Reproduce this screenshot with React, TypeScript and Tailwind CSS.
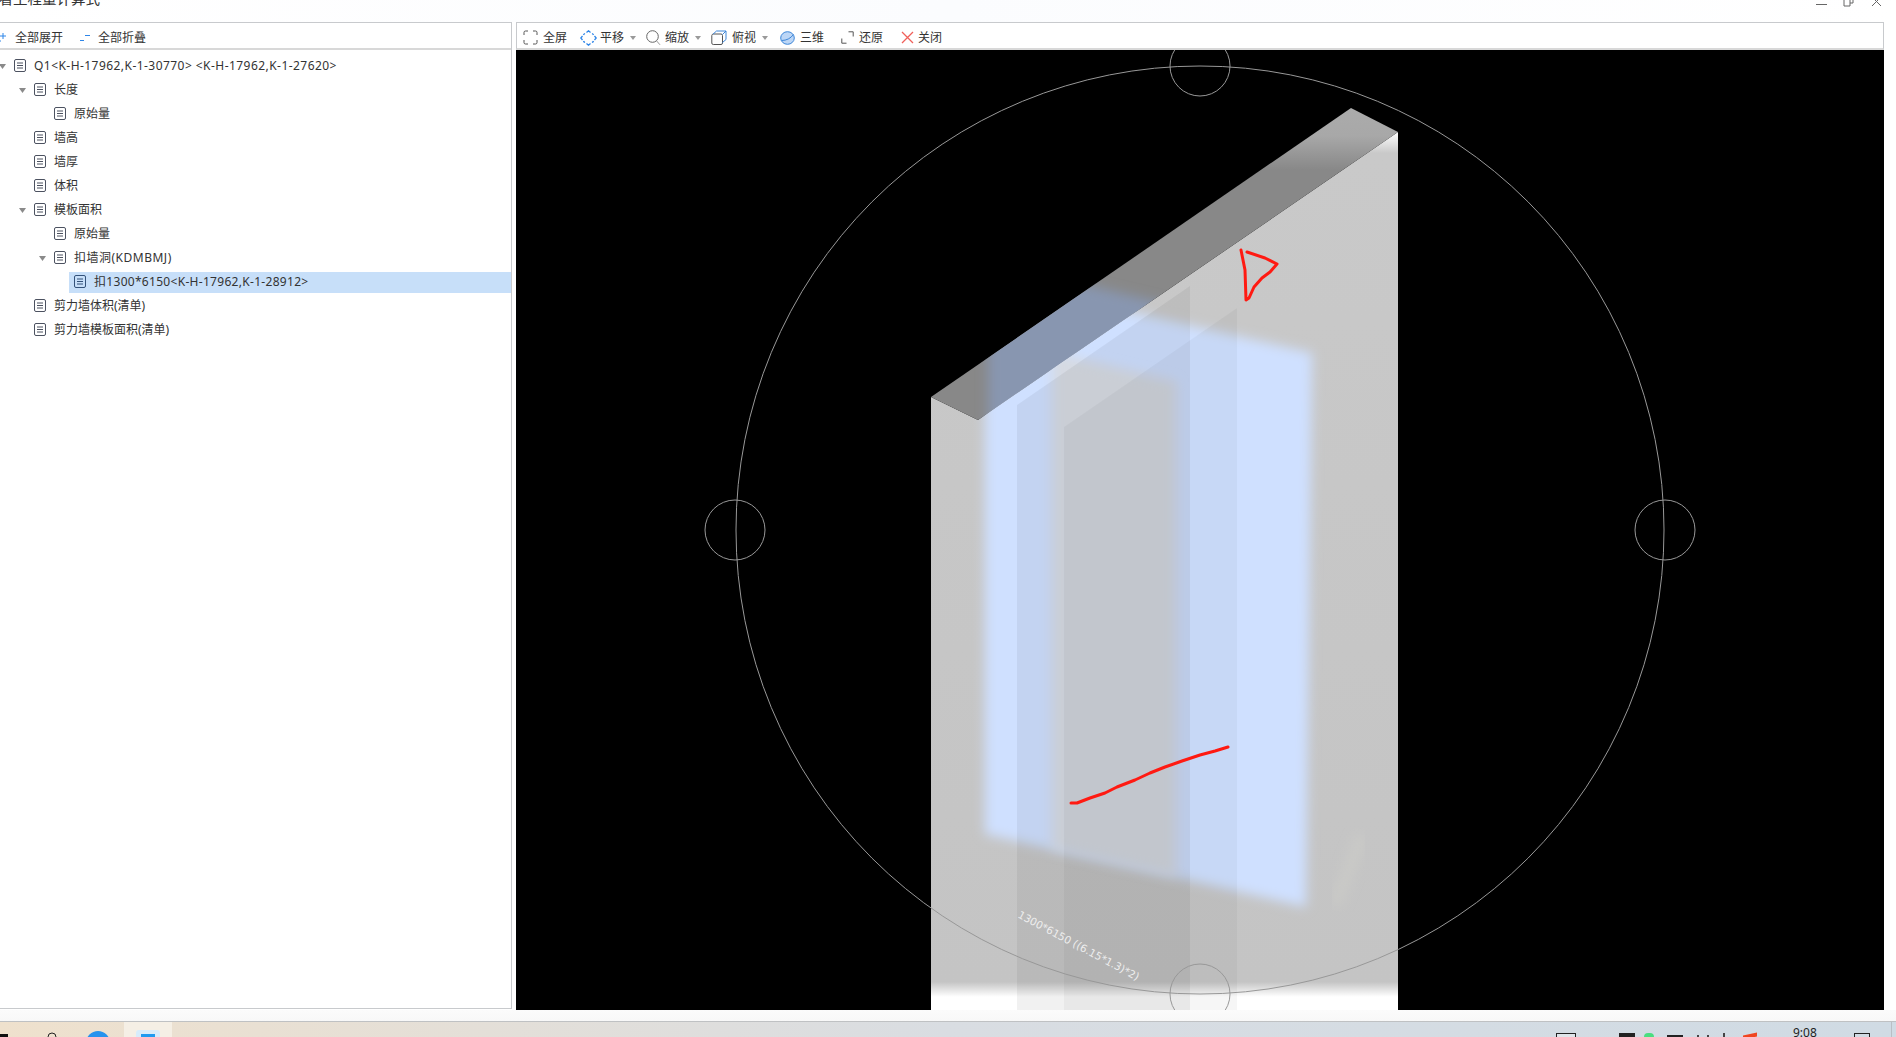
const indent = ["pl-0", "pl-5", "pl-10", "pl-[60px]"];

const rows = [
  { level: 0, open: true, tracking: "tracking-[0.45px]", label: "Q1<K-H-17962,K-1-30770> <K-H-17962,K-1-27620>" },
  { level: 1, open: true, label: "长度" },
  { level: 2, label: "原始量" },
  { level: 1, label: "墙高" },
  { level: 1, label: "墙厚" },
  { level: 1, label: "体积" },
  { level: 1, open: true, label: "模板面积" },
  { level: 2, label: "原始量" },
  { level: 2, open: true, tracking: "tracking-[0.5px]", label: "扣墙洞(KDMBMJ)" },
  { level: 3, selected: true, tracking: "tracking-[0.3px]", label: "扣1300*6150<K-H-17962,K-1-28912>" },
  { level: 1, label: "剪力墙体积(清单)" },
  { level: 1, label: "剪力墙模板面积(清单)" },
];

const DocIcon = ({ selected }: { selected?: boolean }) => (
  <svg width="12" height="13" viewBox="0 0 12 13" fill="none" stroke={selected ? "#34527a" : "#4c5260"} className="shrink-0 -mt-[2px]">
    <rect x="0.5" y="0.5" width="11" height="12" rx="1.5" />
    <path d="M3 4h6M3 6.500h6M3 9h6" />
  </svg>
);

const Caret = () => (
  <svg width="6" height="4" viewBox="0 0 6 4" className="ml-[6px] shrink-0">
    <path d="M0 0h6L3 4z" fill="#9a9a9a" />
  </svg>
);

const TreeRow = ({ level, open, label, selected, tracking }: { level: number; open?: boolean; label: string; selected?: boolean; tracking?: string }) => {
  const textClass = `ml-2 text-[12px] text-[#333] whitespace-nowrap ${tracking ?? ""}`;
  if (selected) {
    return (
      <div className="h-6 pl-[69px] flex items-center">
        <div className="w-full h-[21px] bg-[#c7dff9] pl-[5px] flex items-center">
          <DocIcon selected />
          <span className={textClass}>{label}</span>
        </div>
      </div>
    );
  }
  return (
    <div className={`h-6 flex items-center ${indent[level]}`}>
      <div className="w-[14px] shrink-0 flex items-center">
        {open && (
          <svg width="7" height="5" viewBox="0 0 7 5" className="-ml-[1px]">
            <path d="M0 0h7L3.500 5z" fill="#8a8a8a" />
          </svg>
        )}
      </div>
      <DocIcon />
      <span className={textClass}>{label}</span>
    </div>
  );
};

const ToolButton = ({ icon, label, caret, className }: { icon: React.ReactNode; label: string; caret?: boolean; className: string }) => (
  <div className={`flex items-center shrink-0 ${className}`}>
    {icon}
    <span className="text-[12px] text-[#333] whitespace-nowrap">{label}</span>
    {caret && <Caret />}
  </div>
);

const WallView = () => (
  <svg width="1368" height="960" viewBox="516 50 1368 960" className="block bg-black">
    <defs>
      <linearGradient id="wallFill" gradientUnits="userSpaceOnUse" x1="0" y1="132" x2="0" y2="1010">
        <stop offset="0" stopColor="#ffffff" />
        <stop offset="0.024" stopColor="#c9c9c9" />
        <stop offset="0.968" stopColor="#c4c4c4" />
        <stop offset="0.985" stopColor="#ffffff" />
        <stop offset="1" stopColor="#ffffff" />
      </linearGradient>
      <linearGradient id="topFill" gradientUnits="userSpaceOnUse" x1="0" y1="108" x2="0" y2="170">
        <stop offset="0" stopColor="#ababab" />
        <stop offset="0.45" stopColor="#a8a8a8" />
        <stop offset="1" stopColor="#888888" />
      </linearGradient>
      <filter id="soft" x="-10%" y="-10%" width="120%" height="120%">
        <feGaussianBlur stdDeviation="6" />
      </filter>
      <clipPath id="frontClip">
        <polygon points="931,397 978,420 1398,132 1398,1010 931,1010" />
      </clipPath>
      <clipPath id="topClip">
        <polygon points="931,397 978,420 1398,132 1351,108" />
      </clipPath>
    </defs>

    <polygon points="931,397 978,420 1398,132 1398,1010 931,1010" fill="url(#wallFill)" />
    <polygon points="931,397 978,420 1398,132 1351,108" fill="url(#topFill)" />

    <g clipPath="url(#topClip)">
      <polygon points="988,262 1320,340 1310,500 988,500" fill="#8896b0" filter="url(#soft)" />
    </g>

    <g clipPath="url(#frontClip)">
      <polygon points="985,279 1312,353 1306,907 985,834" fill="#cfe0ff" filter="url(#soft)" />
      <polygon points="1052,352 1176,382 1176,877 1052,849" fill="#d6dae2" filter="url(#soft)" />
      <polygon points="1017,405 1190,286 1190,1010 1017,1010" fill="#000000" fillOpacity="0.055" />
      <polygon points="1064,427 1237,308 1237,1010 1064,1010" fill="#000000" fillOpacity="0.035" />
      <path d="M1362 835L1335 905" stroke="#cfcfc9" strokeOpacity="0.5" strokeWidth="12" filter="url(#soft)" />
    </g>

    <g fill="none" stroke="#989898" strokeWidth="1">
      <circle cx="1200" cy="530" r="464" />
      <circle cx="1200" cy="66" r="30" />
      <circle cx="1200" cy="994" r="30" />
      <circle cx="735" cy="530" r="30" />
      <circle cx="1665" cy="530" r="30" />
    </g>

    <text x="1017" y="917" transform="rotate(28 1017 917)" fill="#eeeeee" fontSize="10.500" fontFamily="'DejaVu Sans', sans-serif">
      1300*6150 ((6.15*1.3)*2)
    </text>

    <g fill="none" stroke="#ff1a12" strokeWidth="3" strokeLinecap="round" strokeLinejoin="round">
      <path d="M1241 250L1245 270L1246 300L1249 298L1254 287L1262 278L1270 272L1277 264L1265 258L1247 252" />
      <path d="M1071 803L1077 803L1090 798L1105 793L1117 787L1135 780L1150 773L1165 767L1182 761L1200 755L1215 751L1228 747" />
    </g>
  </svg>
);

const App = () => {
  return (
    <div className="w-[1896px] h-[1037px] overflow-hidden flex flex-col bg-white font-['Noto_Sans','Noto_Sans_CJK_SC',sans-serif]">
      {/* title bar, cut by the top of the screenshot */}
      <div className="h-[22px] shrink-0 flex justify-between overflow-hidden bg-gradient-to-r from-white via-[#fbfcfe] to-white">
        <div className="-mt-[12px] -ml-[16px] text-[14.500px] leading-[20px] text-[#333] whitespace-nowrap">查看工程量计算式</div>
        <svg width="80" height="10" viewBox="0 0 80 10" fill="none" stroke="#666">
          <path d="M0 4.500h11" />
          <path d="M28 0v6h6V0M34 3h3V0" />
          <path d="M56 -3l9 9M65 -3l-9 9" />
        </svg>
      </div>

      <div className="h-[988px] shrink-0 flex pr-[12px]">
        {/* calculation tree */}
        <div className="w-[512px] shrink-0 h-[987px] flex flex-col border-t border-r border-b border-[#c8cacd]">
          <div className="h-[27px] shrink-0 flex items-center pt-[4px] border-b-2 border-[#d8d8d8]">
            <svg width="9" height="10" viewBox="0 0 9 10" className="-ml-[2px] mr-2" fill="none" stroke="#2f86e8">
              <path d="M5 0v6M2 3h6M0 8h3" />
            </svg>
            <span className="text-[12px] text-[#333]">全部展开</span>
            <svg width="10" height="8" viewBox="0 0 10 8" className="ml-[17px] mr-2" fill="none" stroke="#2f86e8">
              <path d="M5 1.500h5M0 6.500h4" />
            </svg>
            <span className="text-[12px] text-[#333]">全部折叠</span>
          </div>
          <div className="pt-[4px]">
            {rows.map((row, i) => (
              <TreeRow key={i} {...row} />
            ))}
          </div>
        </div>

        {/* 3d view */}
        <div className="ml-[4px] w-[1368px] shrink-0 flex flex-col">
          <div className="h-[28px] shrink-0 flex items-center border border-b-2 border-[#c8cacd] border-b-[#d8d8d8] pl-[6px] pt-[4px]">
            <ToolButton
              className="w-[57px]"
              label="全屏"
              icon={
                <svg width="15" height="15" viewBox="0 0 15 15" className="mr-[5px]" fill="none" stroke="#555">
                  <path d="M1 5V2.500A1.500 1.500 0 0 1 2.500 1H5M10 1h2.500A1.500 1.500 0 0 1 14 2.500V5M14 10v2.500a1.500 1.500 0 0 1-1.500 1.500H10M5 14H2.500A1.500 1.500 0 0 1 1 12.500V10" />
                </svg>
              }
            />
            <ToolButton
              className="w-[66px]"
              label="平移"
              caret
              icon={
                <svg width="17" height="16" viewBox="0 0 17 16" className="mr-[3px]" fill="none" stroke="#2f86e8" strokeWidth="1.300">
                  <path d="M6.500 2.500L8.500 0.800l2 1.700M6.500 13.500l2 1.700 2-1.700M2.500 6l-1.700 2 1.700 2M14.500 6l1.700 2-1.700 2" />
                  <path d="M5 3.500Q3.800 4 3.500 5M12 3.500q1.200.5 1.500 1.500M5 12.500q-1.200-.5-1.500-1.500M12 12.500q1.200-.5 1.500-1.500" />
                </svg>
              }
            />
            <ToolButton
              className="w-[65px]"
              label="缩放"
              caret
              icon={
                <svg width="15" height="16" viewBox="0 0 15 16" className="mr-[4px]" fill="none" stroke="#666">
                  <circle cx="6.500" cy="6.500" r="5.800" />
                  <path d="M10.700 11l3.300 3.800" stroke="#999" />
                </svg>
              }
            />
            <ToolButton
              className="w-[69px]"
              label="俯视"
              caret
              icon={
                <svg width="16" height="16" viewBox="0 0 16 16" className="mr-[5px]" fill="none" stroke="#555">
                  <path d="M0.800 5.500v7.500a1.500 1.500 0 0 0 1.500 1.500H10a1.500 1.500 0 0 0 1.500-1.500V5.500A1.500 1.500 0 0 0 10 4H2.500Q1 4 .8 5.500z" />
                  <path d="M2 4.200L5.500 1H15l-3.500 3.500" stroke="#3d86d8" />
                  <path d="M15 1v8.500l-3.500 3" stroke="#3d86d8" />
                </svg>
              }
            />
            <ToolButton
              className="w-[61px]"
              label="三维"
              icon={
                <svg width="15" height="14" viewBox="0 0 15 14" className="mr-[5px]">
                  <ellipse cx="7.500" cy="7" rx="6.800" ry="6.300" fill="#bcd6f6" stroke="#3d86d8" />
                  <path d="M1.500 9.500Q9 9.500 13.500 3.500" fill="none" stroke="#3d86d8" />
                </svg>
              }
            />
            <ToolButton
              className="w-[60px]"
              label="还原"
              icon={
                <svg width="13" height="13" viewBox="0 0 13 13" className="mr-[5px]" fill="none" stroke="#555">
                  <path d="M0.800 7.500v4.700h4.700M7.500 .8h4.700v4.700" />
                </svg>
              }
            />
            <ToolButton
              className="w-[45px]"
              label="关闭"
              icon={
                <svg width="13" height="13" viewBox="0 0 13 13" className="mr-[4px]" fill="none" stroke="#f0605a" strokeWidth="1.300">
                  <path d="M1 1l11 11M12 1L1 12" />
                </svg>
              }
            />
          </div>
          <WallView />
        </div>
      </div>

      <div className="h-[11px] shrink-0 bg-gradient-to-b from-[#fbfbfb] to-[#f8f8f8]" />

      {/* windows taskbar, cut by the bottom of the screenshot */}
      <div className="h-[16px] shrink-0 border-t border-[#bfc1c3] bg-gradient-to-r from-[#efe1cd] via-[#d9dde2] to-[#d0dbe4] flex items-start overflow-hidden relative">
        <div className="w-[8px] h-[3px] mt-[12px] bg-[#111]" />
        <svg width="12" height="6" viewBox="0 0 12 6" className="ml-[38px] mt-[9px]" fill="none" stroke="#222">
          <circle cx="6" cy="6" r="4" />
        </svg>
        <div className="ml-[28px] mt-[9px] w-6 h-6 rounded-full bg-[#2793ee]" />
        <div className="ml-[14px] w-[48px] h-[16px] bg-[#f5efe5] flex justify-center pt-[8px]">
          <div className="w-6 h-6 rounded-[3px] bg-[#d7ecfb] flex justify-center pt-[4px]">
            <div className="w-[14px] h-[5px] bg-[#1e9af0]" />
          </div>
        </div>
        <div className="ml-[1384px] mt-[11px] w-[20px] h-[8px] border border-[#222] bg-[#dfe5ea]" />
        <div className="ml-[43px] mt-[11px] w-[16px] h-[8px] bg-[#222]" />
        <div className="ml-[9px] mt-[11px] w-[10px] h-[8px] rounded-full bg-[#4ade80]" />
        <div className="ml-[13px] mt-[13px] w-[16px] h-[2px] bg-[#222]" />
        <div className="ml-[14px] mt-[13px] w-[2px] h-[3px] bg-[#444]" />
        <div className="ml-[8px] mt-[13px] w-[2px] h-[3px] bg-[#444]" />
        <div className="ml-[14px] mt-[11px] w-[2px] h-[5px] bg-[#444]" />
        <div className="ml-[18px] mt-[12px] w-[14px] h-[4px] -skew-y-12 bg-[#f0451f]" />
        <span className="ml-[36px] mt-[4px] text-[12px] leading-[14px] text-[#222]">9:08</span>
        <div className="ml-[37px] mt-[11px] w-[16px] h-[8px] border border-[#222]" />
        <div className="absolute right-[4px] top-0 h-full w-px bg-[#b9bfc5]" />
      </div>
    </div>
  );
};

export default App;
